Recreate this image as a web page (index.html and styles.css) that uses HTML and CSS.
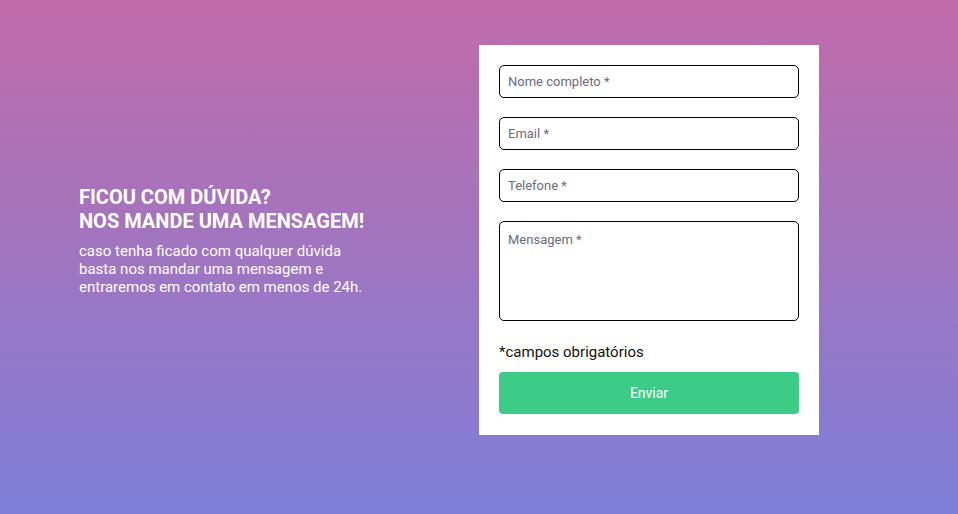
FILE: index.html
```html
<!DOCTYPE html>
<html lang="pt-BR">
<head>
<meta charset="utf-8">
<title>Contato</title>
<link rel="stylesheet" href="styles.css">
</head>
<body>
<main class="page">
  <div class="container">
    <section class="intro">
      <h1 class="intro-title">Ficou com dúvida?<br>Nos mande uma mensagem!</h1>
      <p class="intro-text">caso tenha ficado com qualquer dúvida basta nos mandar uma mensagem e entraremos em contato em menos de 24h.</p>
    </section>
    <form class="card">
      <input class="field" type="text" placeholder="Nome completo *">
      <input class="field" type="email" placeholder="Email *">
      <input class="field" type="tel" placeholder="Telefone *">
      <textarea class="field area" placeholder="Mensagem *"></textarea>
      <p class="note">*campos obrigatórios</p>
      <button class="submit" type="button">Enviar</button>
    </form>
  </div>
</main>
</body>
</html>
```
FILE: styles.css
```css
* { box-sizing: border-box; }
html, body { margin: 0; padding: 0; height: 100%; }
body {
  font-family: Roboto, "Liberation Sans", sans-serif;
  background: linear-gradient(180deg, #c16ca9 0%, #7e7ed8 100%);
  min-height: 514px;
}
.page {
  padding-top: 45px;
}
.container {
  width: 800px;
  margin: 0 auto;
  display: grid;
  grid-template-columns: 400px 400px;
  align-items: center;
}
.intro {
  color: #fff;
  margin-top: 0;
}
.intro-title {
  margin: 0 0 9px;
  font-size: 20px;
  line-height: 24px;
  font-weight: 700;
  text-transform: uppercase;
}
.intro-text {
  margin: 0;
  font-size: 15px;
  line-height: 18px;
  width: 295px;
}
.card {
  width: 340px;
  background: #fff;
  padding: 20px 20px 21px;
  display: flex;
  flex-direction: column;
}
.field {
  display: block;
  width: 300px;
  height: 33px;
  border: 1px solid #000;
  border-radius: 5px;
  padding: 0 8px;
  font-family: Roboto, "Liberation Sans", sans-serif;
  font-size: 13px;
  color: #333;
  margin: 0 0 19px;
  background: #fff;
  outline: none;
}
.field::placeholder { color: #6b6b7e; }
.area {
  height: 100px;
  padding: 10px 8px;
  resize: none;
  margin-bottom: 21px;
}
.note {
  margin: 0 0 9px;
  font-size: 15px;
  line-height: 21px;
  color: #111;
}
.submit {
  height: 42px;
  border: 0;
  border-radius: 4px;
  background: #3ccc88;
  color: #fff;
  font-family: Roboto, "Liberation Sans", sans-serif;
  font-size: 14px;
}
```
